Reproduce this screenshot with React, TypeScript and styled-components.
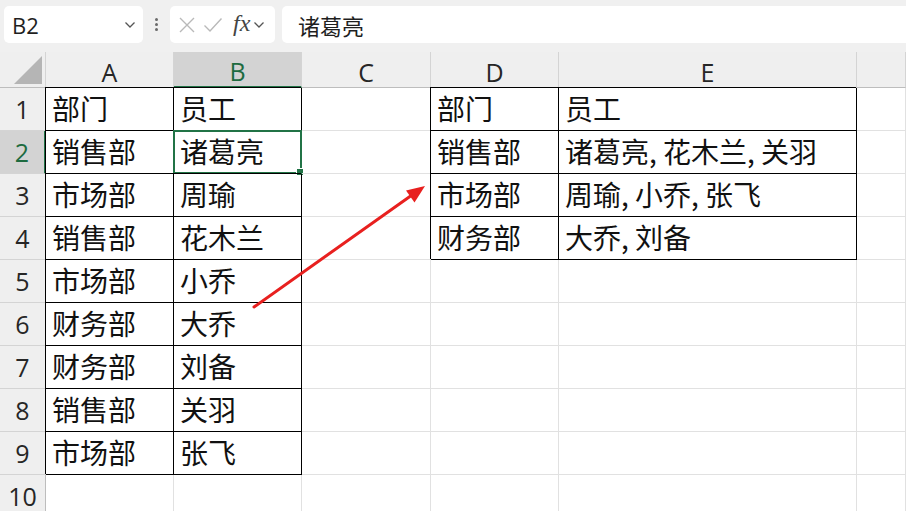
import React from "react";
import styled, { createGlobalStyle } from "styled-components";

const GlobalStyle = createGlobalStyle`
  html, body {
    margin: 0;
    padding: 0;
    background: #ffffff;
    overflow: hidden;
  }
`;

const GREEN = "#217346";
const CJK = `"Noto Sans CJK SC", "Noto Sans", sans-serif`;

const Page = styled.div`
  width: 906px;
  height: 511px;
  overflow: hidden;
  display: flex;
  flex-direction: column;
  font-family: ${CJK};
`;

const Toolbar = styled.div`
  height: 52px;
  flex: none;
  display: flex;
  align-items: center;
  padding: 0 0 3px 4px;
  box-sizing: border-box;
  background: #f0f0f0;
`;

const NameBox = styled.div`
  width: 139px;
  height: 37px;
  box-sizing: border-box;
  background: #fff;
  border-radius: 5px;
  display: flex;
  align-items: center;
  justify-content: space-between;
  padding: 0 7px 0 8px;
  font-family: "Open Sans", "Noto Sans", sans-serif;
  font-size: 22px;
  color: #1f1f1f;
`;

const Grip = styled.div`
  width: 27px;
  display: flex;
  flex-direction: column;
  align-items: center;
  gap: 2px;
  span {
    width: 3px;
    height: 3px;
    border-radius: 50%;
    background: #6a6a6a;
  }
`;

const FxBox = styled.div`
  width: 105px;
  height: 37px;
  box-sizing: border-box;
  background: #fff;
  border-radius: 5px;
  display: flex;
  align-items: center;
  padding: 0 4px 0 8px;
  gap: 7px;
`;

const Fx = styled.span`
  font-family: "Liberation Serif", "DejaVu Serif", serif;
  font-style: italic;
  font-size: 24px;
  color: #444;
  margin-left: 3px;
  margin-right: -4px;
  line-height: 1;
  padding-bottom: 3px;
`;

const FormulaInput = styled.div`
  flex: 1;
  margin-left: 7px;
  height: 37px;
  background: #fff;
  border-radius: 5px 0 0 5px;
  display: flex;
  align-items: center;
  padding-left: 16px;
  font-size: 22px;
  color: #1f1f1f;
`;

const Sheet = styled.div`
  position: relative;
  flex: 1;
`;

const Grid = styled.div`
  display: grid;
  grid-template-columns: 46px 128px 128px 129px 128px 298px 1fr;
  grid-template-rows: 36px repeat(10, 43px);
  background: #fff;
`;

const Corner = styled.div`
  background: #efefef;
  border-right: 1px solid #d4d4d4;
  border-bottom: 1px solid #bdbdbd;
  position: relative;
  &::after {
    content: "";
    position: absolute;
    right: 3px;
    bottom: 3px;
    width: 0;
    height: 0;
    border-left: 28px solid transparent;
    border-bottom: 28px solid #b5b5b5;
  }
`;

const ColHead = styled.div<{ $active?: boolean }>`
  background: ${(p) => (p.$active ? "#d3d3d3" : "#efefef")};
  border-right: 1px solid #d4d4d4;
  border-bottom: ${(p) => (p.$active ? `2px solid ${GREEN}` : "1px solid #bdbdbd")};
  display: flex;
  align-items: center;
  justify-content: center;
  font-family: "Open Sans", "Noto Sans", sans-serif;
  font-size: 25px;
  color: ${(p) => (p.$active ? "#1d6b40" : "#262626")};
  padding-top: 4px;
  box-sizing: border-box;
`;

const RowHead = styled.div<{ $active?: boolean }>`
  background: ${(p) => (p.$active ? "#d3d3d3" : "#efefef")};
  border-right: ${(p) => (p.$active ? `2px solid ${GREEN}` : "1px solid #bdbdbd")};
  border-bottom: 1px solid #d4d4d4;
  display: flex;
  align-items: center;
  justify-content: center;
  font-family: "Open Sans", "Noto Sans", sans-serif;
  font-size: 25px;
  color: ${(p) => (p.$active ? "#1d6b40" : "#262626")};
  box-sizing: border-box;
`;

const Cell = styled.div<{ $boxed?: boolean }>`
  position: relative;
  border-right: 1px solid ${(p) => (p.$boxed ? "#000" : "#e1e1e1")};
  border-bottom: 1px solid ${(p) => (p.$boxed ? "#000" : "#e1e1e1")};
  box-shadow: ${(p) => (p.$boxed ? "-1px -1px 0 #000" : "none")};
  display: flex;
  align-items: center;
  padding: 0 0 2px 6px;
  box-sizing: border-box;
  font-size: 28px;
  color: #111;
  white-space: nowrap;
  overflow: visible;
`;

const Selection = styled.div`
  position: absolute;
  left: -1px;
  top: -1px;
  right: -1px;
  bottom: -1px;
  border: 2px solid ${GREEN};
  pointer-events: none;
  &::after {
    content: "";
    position: absolute;
    right: -4px;
    bottom: -4px;
    width: 6px;
    height: 6px;
    background: ${GREEN};
    border: 1px solid #fff;
  }
`;

const ArrowLayer = styled.svg`
  position: absolute;
  left: 0;
  top: 0;
  pointer-events: none;
`;

const Chevron = () => (
  <svg width="12" height="8" viewBox="0 0 12 8">
    <path d="M1.5 1.5 L6 6 L10.5 1.5" fill="none" stroke="#555" strokeWidth="1.3" />
  </svg>
);

const colA = ["部门", "销售部", "市场部", "销售部", "市场部", "财务部", "财务部", "销售部", "市场部"];
const colB = ["员工", "诸葛亮", "周瑜", "花木兰", "小乔", "大乔", "刘备", "关羽", "张飞"];
const colD = ["部门", "销售部", "市场部", "财务部"];
const colE = ["员工", "诸葛亮, 花木兰, 关羽", "周瑜, 小乔, 张飞", "大乔, 刘备"];
const letters = ["A", "B", "C", "D", "E", ""];

export default function App() {
  const rows = Array.from({ length: 10 }, (_, i) => i);
  return (
    <Page>
      <GlobalStyle />
      <Toolbar>
        <NameBox>
          <span>B2</span>
          <Chevron />
        </NameBox>
        <Grip>
          <span />
          <span />
          <span />
        </Grip>
        <FxBox>
          <svg width="18" height="18" viewBox="0 0 18 18">
            <path d="M2 2 L16 16 M16 2 L2 16" stroke="#b9b9b9" strokeWidth="1.4" />
          </svg>
          <svg width="20" height="18" viewBox="0 0 20 18">
            <path d="M1.5 9.5 L7 15 L18.5 2.5" fill="none" stroke="#b9b9b9" strokeWidth="1.4" />
          </svg>
          <Fx>fx</Fx>
          <Chevron />
        </FxBox>
        <FormulaInput>诸葛亮</FormulaInput>
      </Toolbar>
      <Sheet>
        <Grid>
          <Corner />
          {letters.map((l, i) => (
            <ColHead key={i} $active={l === "B"}>
              {l}
            </ColHead>
          ))}
          {rows.map((r) => (
            <React.Fragment key={r}>
              <RowHead $active={r === 1}>{r + 1}</RowHead>
              <Cell $boxed={r < 9}>{colA[r]}</Cell>
              <Cell $boxed={r < 9}>
                {colB[r]}
                {r === 1 && <Selection />}
              </Cell>
              <Cell />
              <Cell $boxed={r < 4}>{colD[r]}</Cell>
              <Cell $boxed={r < 4}>{colE[r]}</Cell>
              <Cell />
            </React.Fragment>
          ))}
        </Grid>
        <ArrowLayer width="906" height="459" viewBox="0 0 906 459">
          <line x1="254" y1="255" x2="412" y2="143" stroke="#e8201f" strokeWidth="3" strokeLinecap="round" />
          <polygon points="425,134 414.5,150.5 406,138.5" fill="#e8201f" />
        </ArrowLayer>
      </Sheet>
    </Page>
  );
}
